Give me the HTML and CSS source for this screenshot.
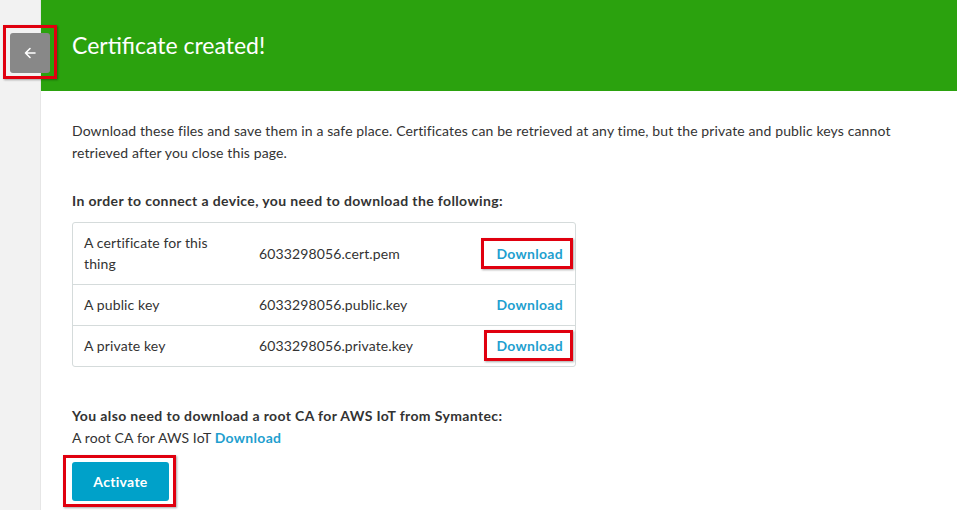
FILE: index.html
```html
<!DOCTYPE html>
<html>
<head>
<meta charset="utf-8">
<link rel="stylesheet" href="styles.css">
</head>
<body>
<div class="page">
  <aside class="rail"></aside>
  <main class="main">
    <header class="banner">
      <h1 class="title">Certificate created!</h1>
    </header>
    <section class="content">
      <p class="intro">Download these files and save them in a safe place. Certificates can be retrieved at any time, but the private and public keys cannot retrieved after you close this page.</p>
      <h2 class="subhead">In order to connect a device, you need to download the following:</h2>
      <div class="files">
        <div class="row">
          <div class="c1">A certificate for this thing</div>
          <div class="c2">6033298056.cert.pem</div>
          <div class="c3"><a class="link marked m1">Download</a></div>
        </div>
        <div class="row">
          <div class="c1">A public key</div>
          <div class="c2">6033298056.public.key</div>
          <div class="c3"><a class="link">Download</a></div>
        </div>
        <div class="row">
          <div class="c1">A private key</div>
          <div class="c2">6033298056.private.key</div>
          <div class="c3"><a class="link marked m3">Download</a></div>
        </div>
      </div>
      <h2 class="subhead also">You also need to download a root CA for AWS IoT from Symantec:</h2>
      <p class="rootca">A root CA for AWS IoT <a class="link">Download</a></p>
      <div class="actions">
        <button class="activate">Activate</button>
      </div>
    </section>
  </main>
  <div class="back-wrap">
    <button class="back" aria-label="Back">
      <svg width="14" height="14" viewBox="0 0 14 14"><path d="M12 7H2.5M7 2.5 2.5 7 7 11.5" fill="none" stroke="#fff" stroke-width="1.6" stroke-linecap="round" stroke-linejoin="round"/></svg>
    </button>
  </div>
</div>
</body>
</html>
```
FILE: styles.css
```css
* { box-sizing: border-box; }
html, body { margin: 0; padding: 0; }
body {
  font-family: Lato, "Open Sans", sans-serif;
  font-size: 14px;
  color: #333;
  background: #fff;
  letter-spacing: 0.12px;
}
.page {
  position: relative;
  display: flex;
  min-height: 510px;
}
.rail {
  width: 41px;
  flex: none;
  background: #f2f2f2;
  border-right: 1px solid #e6e6e6;
}
.main { flex: 1; }
.banner {
  height: 91px;
  background: #2ba20e;
  display: flex;
  align-items: center;
  padding-left: 31px;
  padding-bottom: 2px;
}
.title {
  margin: 0;
  color: #fff;
  font-weight: 400;
  font-size: 23px;
  letter-spacing: 0;
}
.content { padding: 29px 31px 0; }
.intro { margin: 0; line-height: 22px; max-width: 850px; }
.subhead {
  margin: 26px 0 0;
  font-size: 14px;
  font-weight: 700;
  line-height: 22px;
  letter-spacing: 0.37px;
}
.files {
  margin-top: 10px;
  width: 504px;
  border: 1px solid #d5dbdb;
  border-radius: 3px;
}
.row {
  display: flex;
  align-items: center;
  padding: 9px 12px 10px 11px;
  line-height: 21px;
}
.row + .row { border-top: 1px solid #d5dbdb; }
.c1 { width: 175px; padding-right: 20px; }
.c2 { flex: 1; }
.c3 { text-align: right; }
.link {
  color: #1f9fcf;
  font-weight: 700;
  text-decoration: none;
  letter-spacing: 0.3px;
}
.marked { position: relative; display: inline-block; }
.marked::after {
  content: "";
  position: absolute;
  left: -15px;
  right: -10px;
  top: -5px;
  bottom: -5px;
  border: 3px solid #e0000f;
  box-shadow: 1px 1px 2px rgba(0,0,0,.35);
}
.m3::after { left: -12px; }
.also { margin-top: 38px; }
.rootca { margin: 0; line-height: 21px; }
.actions {
  margin-top: 14px;
  position: relative;
  display: inline-block;
}
.actions::after {
  content: "";
  position: absolute;
  left: -9px;
  right: -7px;
  top: -7px;
  bottom: -6px;
  border: 3px solid #e0000f;
  box-shadow: 1px 1px 2px rgba(0,0,0,.35);
}
.activate {
  display: block;
  width: 97px;
  height: 39px;
  border: 0;
  border-radius: 3px;
  background: #00a1c9;
  color: #fff;
  font-family: inherit;
  font-weight: 700;
  font-size: 14px;
  letter-spacing: 0.3px;
}
.back-wrap {
  position: absolute;
  left: 3px;
  top: 25px;
  width: 54px;
  height: 54px;
  border: 3px solid #e0000f;
  box-shadow: 1px 1px 2px rgba(0,0,0,.35);
  padding: 5px 4px 5px 4px;
}
.back {
  width: 40px;
  height: 40px;
  border: 0;
  border-radius: 3px;
  background: #888;
  display: flex;
  align-items: center;
  justify-content: center;
  padding: 0;
}
```
